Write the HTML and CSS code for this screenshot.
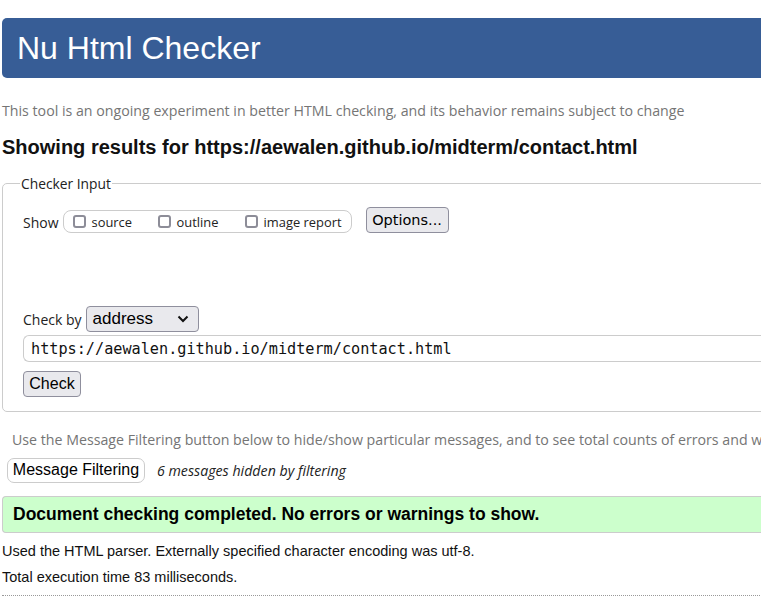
FILE: index.html
```html
<!DOCTYPE html>
<html lang="en">
<head>
<meta charset="utf-8">
<title>Nu Html Checker</title>
<link rel="stylesheet" href="styles.css">
</head>
<body>
<div class="page">
  <h1 class="banner">Nu Html Checker</h1>
  <p class="tagline">This tool is an ongoing experiment in better HTML checking, and its behavior remains subject to change</p>
  <h2 class="results">Showing results for https://aewalen.github.io/midterm/contact.html</h2>
  <fieldset class="input">
    <legend class="legend">Checker Input</legend>
    <div class="show-row">
      <span class="show-label">Show</span>
      <span class="show-group">
        <label class="opt"><span class="box"></span>source</label>
        <label class="opt"><span class="box"></span>outline</label>
        <label class="opt"><span class="box"></span>image report</label>
      </span>
      <button class="btn options" type="button">Options...</button>
    </div>
    <div class="checkby-row">
      <span class="checkby-label">Check by</span>
      <span class="select">address<svg class="chev" width="12" height="8" viewBox="0 0 12 8"><path d="M1.5 1.5 L6 6 L10.5 1.5" fill="none" stroke="#111" stroke-width="2"/></svg></span>
    </div>
    <div class="url">https://aewalen.github.io/midterm/contact.html</div>
    <button class="btn check" type="button">Check</button>
  </fieldset>
  <p class="filter-note">Use the Message Filtering button below to hide/show particular messages, and to see total counts of errors and warnings.</p>
  <div class="filter-row">
    <button class="filter-btn" type="button">Message Filtering</button>
    <span class="hidden-note">6 messages hidden by filtering</span>
  </div>
  <div class="success">Document checking completed. No errors or warnings to show.</div>
  <p class="meta">Used the HTML parser. Externally specified character encoding was utf-8.</p>
  <p class="meta">Total execution time 83 milliseconds.</p>
  <div class="rule"></div>
</div>
</body>
</html>
```
FILE: styles.css
```css
html, body {
  margin: 0;
  padding: 0;
  overflow: hidden;
  background: #fff;
}
body {
  width: 761px;
  height: 602px;
}
.page {
  width: 1000px;
  padding: 18px 0 0 2px;
  font-family: "Liberation Sans", Arial, sans-serif;
  color: #000;
}
.banner {
  margin: 0;
  height: 60px;
  box-sizing: border-box;
  padding: 0 0 0 15px;
  display: flex;
  align-items: center;
  background: #375d96;
  color: #fff;
  font-weight: normal;
  font-size: 32px;
  border-radius: 5px 0 0 5px;
}
.tagline {
  margin: 23px 0 0 0;
  font-family: "Open Sans", sans-serif;
  font-size: 14.2px;
  line-height: 20px;
  color: #757575;
}
.results {
  margin: 14px 0 0 0;
  font-size: 20px;
  line-height: 24px;
  font-weight: bold;
  color: #111;
}
.input {
  margin: 15px 0 0 0;
  padding: 4px 20px 14px 20px;
  border: 1px solid #ccc;
  border-radius: 5px;
  min-inline-size: auto;
}
.legend {
  padding: 0 1px;
  margin-left: -3px;
  font-family: "Open Sans", sans-serif;
  font-size: 13.8px;
  color: #222;
}
.show-row {
  display: flex;
  align-items: flex-end;
  height: 26px;
  margin-top: 10px;
}
.show-label {
  align-self: center;
  padding-top: 4px;
  font-family: "Open Sans", sans-serif;
  font-size: 14px;
  color: #222;
  margin-right: 4px;
}
.show-group {
  display: flex;
  align-items: center;
  height: 23px;
  box-sizing: border-box;
  width: 289px;
  border: 1px solid #ccc;
  border-radius: 8px;
  padding-left: 9px;
}
.opt {
  display: flex;
  align-items: center;
  font-family: "Open Sans", sans-serif;
  font-size: 12.9px;
  color: #222;
}
.opt:nth-child(1) { width: 85px; }
.opt:nth-child(2) { width: 87px; }
.box {
  width: 13px;
  height: 13px;
  box-sizing: border-box;
  border: 2px solid #8d8d98;
  border-radius: 3px;
  margin-right: 6px;
}
.btn {
  font-family: "Liberation Sans", Arial, sans-serif;
  background: #e9e9ed;
  border: 1px solid #8f8f9d;
  border-radius: 4px;
  color: #000;
  padding: 0 6px;
  height: 26px;
  box-sizing: border-box;
}
.options {
  margin-left: 14px;
  width: 83px;
  font-family: "DejaVu Sans", sans-serif;
  font-size: 14.5px;
  padding: 0;
}
.checkby-row {
  display: flex;
  align-items: center;
  margin-top: 73px;
  height: 26px;
}
.checkby-label {
  font-family: "Open Sans", sans-serif;
  font-size: 14px;
  color: #222;
  margin-right: 4px;
}
.select {
  display: flex;
  align-items: center;
  justify-content: space-between;
  width: 113px;
  height: 26px;
  box-sizing: border-box;
  padding: 0 9px 0 6px;
  background: #e9e9ed;
  border: 1px solid #8f8f9d;
  border-radius: 4px;
  font-size: 17px;
}
.url {
  margin-top: 3px;
  height: 27px;
  box-sizing: border-box;
  border: 1px solid #ccc;
  border-right: 0;
  border-radius: 6px 0 0 6px;
  padding: 0 0 0 7px;
  display: flex;
  align-items: center;
  font-family: "DejaVu Sans Mono", monospace;
  font-size: 15.2px;
  color: #111;
}
.check {
  margin-top: 9px;
  width: 58px;
  font-size: 16px;
  padding: 0;
}
.filter-note {
  margin: 18px 0 0 10px;
  font-family: "Open Sans", sans-serif;
  font-size: 14.2px;
  line-height: 20px;
  color: #757575;
  white-space: nowrap;
}
.filter-row {
  display: flex;
  align-items: center;
  margin: 7px 0 0 5px;
  height: 26px;
}
.filter-btn {
  height: 25px;
  box-sizing: border-box;
  width: 138px;
  padding: 0;
  background: #fff;
  border: 1px solid #ccc;
  border-radius: 7px;
  font-family: "Liberation Sans", Arial, sans-serif;
  font-size: 16px;
  color: #000;
}
.hidden-note {
  margin-left: 12px;
  font-family: "Open Sans", sans-serif;
  font-style: italic;
  font-size: 14.2px;
  color: #222;
}
.success {
  margin-top: 13px;
  height: 37px;
  box-sizing: border-box;
  display: flex;
  align-items: center;
  padding-left: 10px;
  background: #ccffcc;
  border: 1px solid #ccc;
  border-right: 0;
  border-radius: 4px 0 0 4px;
  font-size: 17.5px;
  font-weight: bold;
  color: #000;
}
.meta {
  margin: 0;
  font-size: 14.5px;
  line-height: 26px;
  color: #111;
}
.success + .meta { margin-top: 5px; }
.rule {
  margin-top: 5px;
  border-top: 1px dotted #999;
}
```
